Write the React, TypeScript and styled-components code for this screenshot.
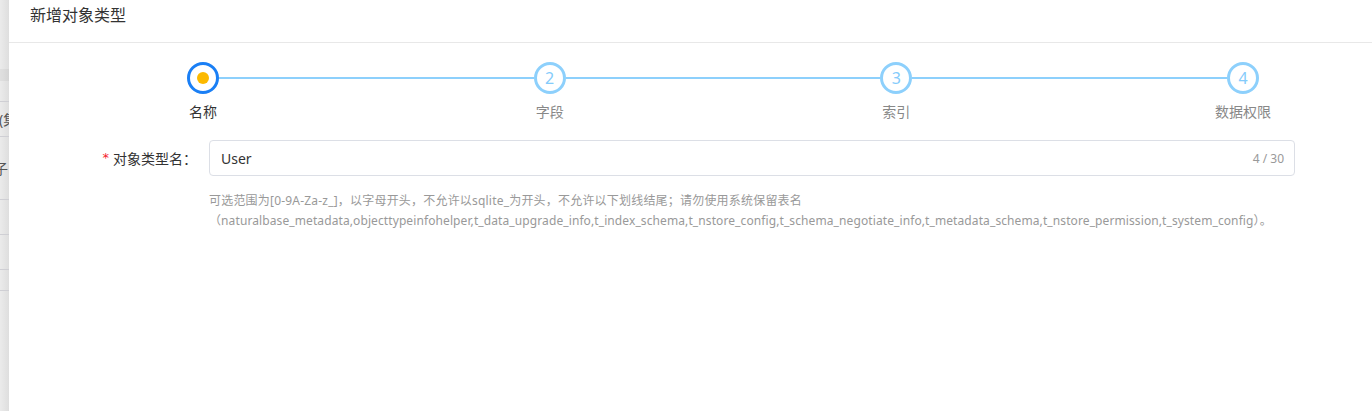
import React from 'react';
import styled, { createGlobalStyle } from 'styled-components';

const GlobalStyle = createGlobalStyle`
  html, body, #root {
    margin: 0;
    padding: 0;
    height: 100%;
  }
  body {
    font-family: "Noto Sans", "Noto Sans CJK SC", sans-serif;
    font-size: 14px;
    color: #333;
    background: #fff;
  }
`;

const Page = styled.div`
  display: flex;
  height: 100vh;
  overflow: hidden;
`;

/* strip of the list page that peeks out behind the drawer */
const Backdrop = styled.div`
  width: 9px;
  flex: none;
  display: flex;
  flex-direction: column;
  background: linear-gradient(to right, #ebebeb, #dedede);
  overflow: hidden;
`;

const BackdropRow = styled.div<{ $h: number; $band?: boolean; $line?: boolean }>`
  height: ${(p) => p.$h}px;
  flex: none;
  box-sizing: border-box;
  border-bottom: ${(p) => (p.$line ? '1px solid #cfcfd4' : 'none')};
  background: ${(p) => (p.$band ? 'rgba(0, 0, 0, 0.045)' : 'transparent')};
  display: flex;
  align-items: center;
  white-space: nowrap;
  font-size: 14px;
  color: #555;
`;

const PeekText = styled.span<{ $shift: number }>`
  margin-left: ${(p) => p.$shift}px;
`;

const Drawer = styled.div`
  flex: 1;
  background: #fff;
  display: flex;
  flex-direction: column;
`;

const DrawerHeader = styled.div`
  height: 43px;
  box-sizing: border-box;
  padding: 4px 21px 0;
  border-bottom: 1px solid #e8e8e8;
  font-size: 16px;
  line-height: 22px;
  color: #333;
`;

const Body = styled.div`
  padding: 19px 77px 0 0;
  display: flex;
  flex-direction: column;
`;

const Steps = styled.div`
  display: flex;
  align-items: flex-start;
  margin-left: 178px;
  margin-right: 36px;
`;

const Step = styled.div`
  width: 32px;
  flex: none;
  display: flex;
  flex-direction: column;
  align-items: center;
`;

const Circle = styled.div<{ $active?: boolean }>`
  width: 32px;
  height: 32px;
  box-sizing: border-box;
  border-radius: 50%;
  border: 3px solid ${(p) => (p.$active ? '#1a7ff5' : '#8dd0fc')};
  display: flex;
  align-items: center;
  justify-content: center;
  font-size: 16px;
  font-weight: 400;
  color: #84cbfb;
  line-height: 1;
`;

const Dot = styled.span`
  width: 12px;
  height: 12px;
  border-radius: 50%;
  background: #fcb900;
`;

const StepLabel = styled.div<{ $active?: boolean }>`
  margin-top: 7px;
  white-space: nowrap;
  font-size: 14px;
  line-height: 22px;
  color: ${(p) => (p.$active ? '#333' : '#888')};
`;

const Connector = styled.div`
  flex: 1;
  height: 2px;
  margin-top: 15px;
  background: #8dd0fc;
`;

const FormRow = styled.div`
  display: grid;
  grid-template-columns: 188px 1fr;
  column-gap: 12px;
  margin-top: 17px;
`;

const Label = styled.label`
  height: 35px;
  display: flex;
  align-items: center;
  justify-content: flex-end;
  font-size: 14px;
  color: #333;
`;

const Required = styled.span`
  color: #f5222d;
  margin-right: 4px;
  font-family: "DejaVu Sans", sans-serif;
  font-size: 13px;
`;

const InputBox = styled.div`
  height: 36px;
  box-sizing: border-box;
  border: 1px solid #dcdfe6;
  border-radius: 4px;
  display: flex;
  align-items: center;
  padding: 0 10px 0 11px;
`;

const Input = styled.input`
  flex: 1;
  border: none;
  outline: none;
  padding: 0;
  font: inherit;
  font-size: 14px;
  color: #333;
  background: transparent;
`;

const Count = styled.span`
  font-size: 12px;
  color: #999;
`;

const Help = styled.div`
  grid-column: 2;
  margin-top: 15px;
  font-size: 12px;
  line-height: 20px;
  color: #999;
`;

const HelpLine = styled.div<{ $spacing: number }>`
  white-space: nowrap;
  letter-spacing: ${(p) => p.$spacing}px;
`;

const steps = ['名称', '字段', '索引', '数据权限'];

const peekRows: { h: number; band?: boolean; line?: boolean; text?: string; shift?: number }[] = [
  { h: 69 },
  { h: 12, band: true },
  { h: 21, line: true },
  { h: 35, line: true, text: '(集', shift: -1 },
  { h: 63, line: true, text: '子', shift: -6 },
  { h: 35, line: true },
  { h: 35, line: true },
  { h: 21, line: true },
  { h: 120 },
];

export default function App() {
  return (
    <Page>
      <GlobalStyle />
      <Backdrop>
        {peekRows.map((r, i) => (
          <BackdropRow key={i} $h={r.h} $band={r.band} $line={r.line}>
            {r.text && <PeekText $shift={r.shift ?? 0}>{r.text}</PeekText>}
          </BackdropRow>
        ))}
      </Backdrop>
      <Drawer>
        <DrawerHeader>新增对象类型</DrawerHeader>
        <Body>
          <Steps>
            {steps.map((s, i) => (
              <React.Fragment key={s}>
                {i > 0 && <Connector />}
                <Step>
                  <Circle $active={i === 0}>{i === 0 ? <Dot /> : i + 1}</Circle>
                  <StepLabel $active={i === 0}>{s}</StepLabel>
                </Step>
              </React.Fragment>
            ))}
          </Steps>
          <FormRow>
            <Label>
              <Required>*</Required>对象类型名：
            </Label>
            <InputBox>
              <Input defaultValue="User" />
              <Count>4 / 30</Count>
            </InputBox>
            <Help>
              <HelpLine $spacing={0.2}>
                可选范围为[0-9A-Za-z_]，以字母开头，不允许以sqlite_为开头，不允许以下划线结尾；请勿使用系统保留表名
              </HelpLine>
              <HelpLine $spacing={0.1}>
                （naturalbase_metadata,objecttypeinfohelper,t_data_upgrade_info,t_index_schema,t_nstore_config,t_schema_negotiate_info,t_metadata_schema,t_nstore_permission,t_system_config）。
              </HelpLine>
            </Help>
          </FormRow>
        </Body>
      </Drawer>
    </Page>
  );
}
